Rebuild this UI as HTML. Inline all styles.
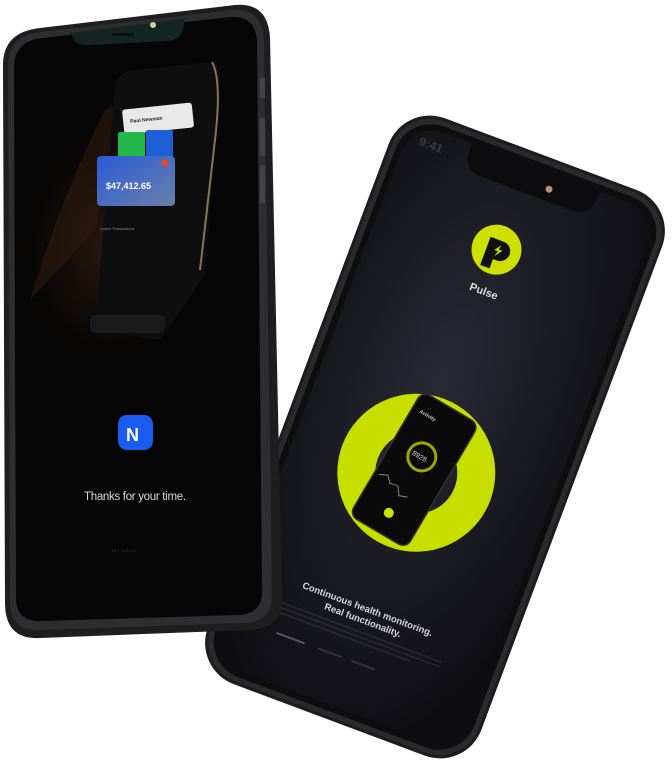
<!DOCTYPE html>
<html><head><meta charset="utf-8"><style>
html,body{margin:0;padding:0;background:#fff;width:672px;height:771px;overflow:hidden}
svg{display:block}
text{font-family:"Liberation Sans",sans-serif}
</style></head><body>
<svg width="672" height="771" viewBox="0 0 672 771" xmlns="http://www.w3.org/2000/svg">
<defs>
<radialGradient id="rg" cx="0.45" cy="0.4" r="0.75">
<stop offset="0" stop-color="#2a2a36"/><stop offset="0.6" stop-color="#17171e"/><stop offset="1" stop-color="#0c0c10"/>
</radialGradient>
<radialGradient id="hand" cx="0.5" cy="0.5" r="0.5">
<stop offset="0" stop-color="#4a2a18"/><stop offset="1" stop-color="#1a0d06" stop-opacity="0"/>
</radialGradient>
<linearGradient id="card" x1="0" y1="0" x2="1" y2="1">
<stop offset="0" stop-color="#2a5bd8"/><stop offset="1" stop-color="#6a7fa8"/>
</linearGradient>
</defs>

<!-- RIGHT PHONE -->
<g transform="translate(435,437) rotate(20.5)">
<rect x="-146" y="-302" width="292" height="604" rx="44" fill="#1c1c1e"/>
<rect x="-143" y="-299" width="286" height="598" rx="42" fill="#2a2a2c"/>
<rect x="-138" y="-294" width="276" height="588" rx="38" fill="#0e0e10"/>
<rect x="-132" y="-288" width="264" height="576" rx="33" fill="url(#rg)"/>
<path d="M-68 -288 h136 v10 a18 18 0 0 1 -18 18 h-100 a18 18 0 0 1 -18 -18 z" fill="#0c0c0f"/>
<circle cx="20" cy="-272" r="3.5" fill="#b88f78"/>
<text x="-118" y="-268" fill="#3a3a44" font-size="12" font-weight="bold">9:41</text>
<circle cx="-8" cy="-197" r="25" fill="#cde000"/>
<path d="M-18 -207 h14 a10 10 0 0 1 0 20 h-4 v10 h-10 z" fill="#111"/>
<path d="M-5 -203 l-5 7 h4 l-2 6 6 -8 h-4 z" fill="#cde000"/>
<text x="-20" y="-150" fill="#ddd" font-size="11" font-weight="bold">Pulse</text>
<circle cx="-5" cy="40" r="60" fill="none" stroke="#c8dd00" stroke-width="38"/>
<g transform="translate(-8,38) rotate(10)">
<rect x="-33" y="-72" width="66" height="144" rx="9" fill="#0a0a0a" stroke="#333" stroke-width="1.5"/>
<text x="-25" y="-52" fill="#ccc" font-size="5" font-weight="bold">Activity</text>
<circle cx="0" cy="-15" r="14" fill="none" stroke="#9aa800" stroke-width="3"/>
<text x="-10" y="-12" fill="#ddd" font-size="7">8928</text>
<path d="M-28 22 l8 -4 6 6 8 -2 6 8 8 -3" stroke="#888" fill="none" stroke-width="1"/>
<circle cx="0" cy="50" r="5" fill="#cde000"/>
</g>
<text x="-72" y="188" fill="#d8d8d8" font-size="9.5" font-weight="bold">Continuous health monitoring.</text>
<text x="-44" y="200" fill="#d8d8d8" font-size="9.5" font-weight="bold">Real functionality.</text>
<rect x="-95" y="208" width="180" height="1.5" fill="#2a2a30"/>
<rect x="-95" y="213" width="180" height="1.5" fill="#2a2a30"/>
<rect x="-95" y="218" width="150" height="1.5" fill="#2a2a30"/>
<rect x="-80" y="238" width="30" height="2" fill="#555"/>
<rect x="-35" y="238" width="25" height="2" fill="#333"/>
<rect x="0" y="238" width="25" height="2" fill="#333"/>
</g>

<!-- LEFT PHONE -->
<path d="M40 28 L235 5 Q268 2 270 38 L282 598 Q283 628 250 630 L40 638 Q6 640 5 605 L3 65 Q3 32 40 28 Z" fill="#1e1e20"/>
<path d="M40 32 L232 10 Q262 8 264 40 L272 596 Q272 622 244 623 L40 630 Q10 632 10 602 L8 66 Q8 36 40 32 Z" fill="#2e2e30"/>
<path d="M42 38 L230 17 Q256 15 257 42 L262 592 Q262 614 238 615 L42 621 Q16 622 16 598 L14 68 Q14 41 42 38 Z" fill="#060606"/>
<path d="M70 33 L185 19 L184 25 Q183 40 168 41 L92 45 Q76 46 73 38 Z" fill="#142522"/>
<circle cx="153" cy="25" r="3" fill="#c8d79a"/>
<rect x="112" y="33" width="22" height="3" rx="1.5" fill="#0a1210"/>
<rect x="260" y="78" width="5" height="20" fill="#444"/>
<rect x="260" y="118" width="5" height="38" fill="#444"/>
<rect x="260" y="165" width="5" height="38" fill="#444"/>
<!-- hand -->
<ellipse cx="110" cy="250" rx="95" ry="120" fill="url(#hand)" opacity="0.6"/>
<path d="M30 300 Q60 200 105 110 Q120 100 118 125 L95 230 Z" fill="#2e1a0f" opacity="0.6"/>
<!-- inner phone -->
<path d="M135 70 L212 62 Q220 62 220 72 L205 275 L160 340 L95 330 L115 85 Q118 72 135 70 Z" fill="#0e0e0e"/>
<path d="M212 62 Q222 80 215 140 L200 270" stroke="#8a7550" stroke-width="2" fill="none"/>
<rect x="123" y="106" width="70" height="25" rx="3" fill="#e8e8e8" transform="rotate(-6 158 118)"/>
<text x="130" y="120" font-size="5" font-weight="bold" fill="#222" transform="rotate(-6 158 118)">Paul Newman</text>
<rect x="118" y="132" width="27" height="32" rx="2" fill="#22b84a"/>
<rect x="146" y="130" width="27" height="32" rx="2" fill="#1f5fd6"/>
<rect x="97" y="156" width="78" height="50" rx="4" fill="url(#card)"/>
<circle cx="165" cy="163" r="3.5" fill="#e8472a"/>
<text x="106" y="189" font-size="9" font-weight="bold" fill="#fff">$47,412.65</text>
<rect x="90" y="315" width="75" height="18" rx="5" fill="#1a1a1a"/>
<text x="100" y="230" font-size="4" fill="#888">Latest Transactions</text>
<!-- N icon -->
<rect x="118" y="415" width="35" height="35" rx="9" fill="#1a5cf0"/>
<text x="126" y="441" font-size="18" font-weight="bold" fill="#fff">N</text>
<text x="84" y="500" font-size="11.5" fill="#d8d8d8" letter-spacing="-0.3">Thanks for your time.</text>
<text x="112" y="552" font-size="4" fill="#333">NET WALLET</text>
</svg>
</body></html>
